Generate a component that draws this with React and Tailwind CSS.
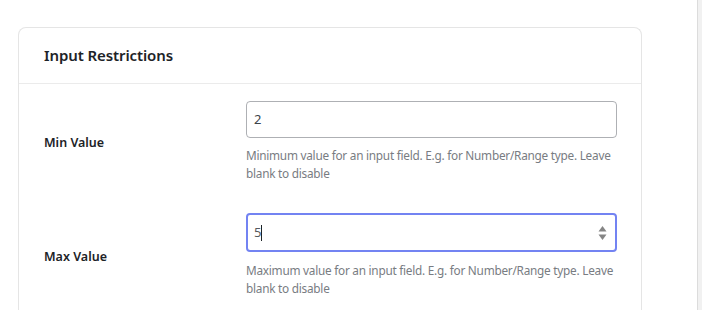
export default function App() {
  const font = { fontFamily: '"Noto Sans", "Open Sans", sans-serif' };
  return (
    <div className="w-[702px] h-[310px] bg-white flex overflow-hidden" style={font}>
      <div className="flex-1 pl-[18px] pt-[27px] pr-[55px]">
        <div className="border border-[#e5e5e5] rounded-t-[8px] border-b-0 bg-white h-[290px]">
          <div className="h-[56px] px-[25px] flex items-center border-b border-[#ebebeb]">
            <h2 className="text-[15px] font-semibold text-[#1d2327] tracking-[-0.1px]">Input Restrictions</h2>
          </div>
          <div className="flex pl-[25px] pr-[24px] pt-[17px]">
            <div className="w-[202px] flex items-center pt-[4px] text-[12.5px] font-semibold text-[#1d2327]">Min Value</div>
            <div className="flex-1">
              <div className="h-[37px] rounded-[4px] border border-[#8c8f94]/70 flex items-center px-[7px] text-[13px] text-[#3c434a]">2</div>
              <p className="mt-[8px] text-[11.8px] leading-[18px] text-[#787c82] tracking-[-0.25px]">Minimum value for an input field. E.g. for Number/Range type. Leave blank to disable</p>
            </div>
          </div>
          <div className="flex pl-[25px] pr-[24px] pt-[31px]">
            <div className="w-[202px] flex items-center pt-[4px] text-[12.5px] font-semibold text-[#1d2327]">Max Value</div>
            <div className="flex-1">
              <div className="h-[39px] rounded-[4px] border-2 border-[#7383f2] flex items-center px-[6px] text-[13px] text-[#555a60]">
                <span>5</span>
                <span className="w-px h-[16px] bg-[#1d2327]"></span>
                <div className="flex-1"></div>
                <svg width="9" height="16" viewBox="0 0 9 16" className="mr-[2px]">
                  <path d="M4.5 1 L8.5 6.5 L0.5 6.5 Z" fill="#858585" />
                  <path d="M4.5 15 L8.5 9.5 L0.5 9.5 Z" fill="#858585" />
                </svg>
              </div>
              <p className="mt-[9px] text-[11.8px] leading-[18px] text-[#787c82] tracking-[-0.25px]">Maximum value for an input field. E.g. for Number/Range type. Leave blank to disable</p>
            </div>
          </div>
        </div>
      </div>
      <div className="w-[5px] bg-[#f1f1f1] border-l border-[#dcdcdc]"></div>
    </div>
  );
}
